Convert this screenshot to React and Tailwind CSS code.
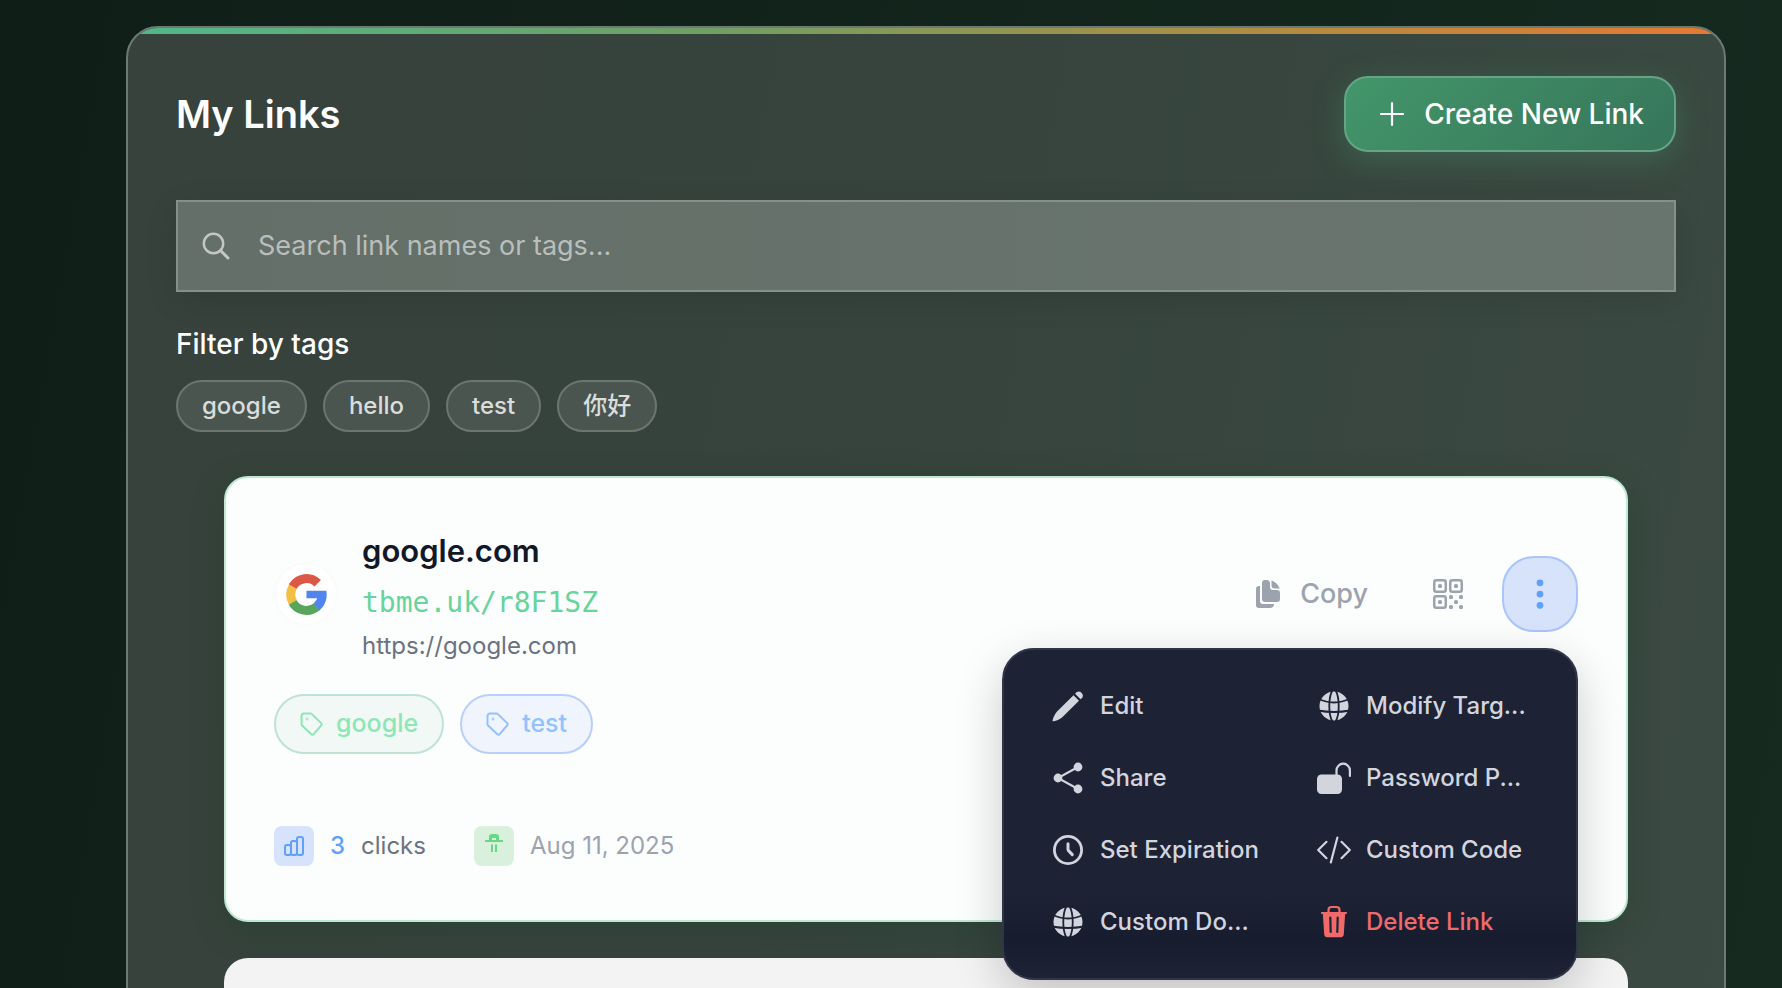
import { useState } from 'react';
import { IoEllipsisVertical } from 'react-icons/io5';

const filterTags = ['google', 'hello', 'test', '你好'];

const linkTags = [
    { label: 'google', style: 'border-[#bfe3d1] bg-[#f2f8f6] text-[#8de6b5]' },
    { label: 'test', style: 'border-[#b9cefb] bg-[#f0f4fd] text-[#93c1fc]' },
];

// Shared 32px frame for the menu and toolbar icons
const Icon = ({ children, outline = false }) => (
    <svg
        viewBox="0 0 32 32"
        width="32"
        height="32"
        className="shrink-0 overflow-visible"
        fill={outline ? 'none' : 'currentColor'}
        stroke={outline ? 'currentColor' : 'none'}
        strokeLinecap="round"
        strokeLinejoin="round"
        aria-hidden="true"
    >
        {children}
    </svg>
);

const PlusIcon = () => (
    <Icon outline>
        <path d="M16 5v22M5 16h22" strokeWidth="2.2" />
    </Icon>
);

const PencilIcon = () => (
    <Icon>
        <path d="M21.500 5.200l5.500 5.500L10.300 27.200C7.500 29.500 4.500 30.600 1.600 31.200c-.8.2-1.200-.2-1-.9C1.300 27.300 2.700 24.300 4.800 21.700z" />
        <path d="M23.100 3.700l1.700-1.700a4.200 4.200 0 0 1 5.500 5.800L28.500 9.300z" />
    </Icon>
);

const GlobeIcon = () => (
    <Icon>
        <circle cx="16" cy="16" r="14.500" />
        <g fill="none" stroke="#1e2235" strokeWidth="1.800">
            <path d="M14.500 0C10.200 8 10.200 24 14.500 32M17.500 0c4.300 8 4.300 24 0 32" />
            <path d="M0 8.500Q16 16.500 32 8.500M0 20.500Q16 23.500 32 20.500" />
        </g>
    </Icon>
);

const ShareIcon = () => (
    <Icon outline>
        <path d="M26 5L6 16l20 11" strokeWidth="2" />
        <g fill="currentColor" stroke="none">
            <circle cx="26" cy="5" r="4.400" />
            <circle cx="6" cy="16" r="4.400" />
            <circle cx="26" cy="27" r="4.400" />
        </g>
    </Icon>
);

const LockOpenIcon = () => (
    <Icon>
        <rect x="-1" y="12.500" width="25" height="19.500" rx="4.500" />
        <path d="M18.500 14V8.400a6.700 6.700 0 0 1 13.400 0V14" fill="none" stroke="currentColor" strokeWidth="2.200" />
    </Icon>
);

const ClockIcon = () => (
    <Icon outline>
        <circle cx="16" cy="16" r="13.600" strokeWidth="2.800" />
        <path d="M16 9.800v5.400a2 2 0 0 0 .5 1.400l3.800 4" strokeWidth="3" />
    </Icon>
);

const CodeIcon = () => (
    <Icon outline>
        <path d="M8.500 7.800L.2 16l8.300 8.200M23.500 7.800l8.300 8.200-8.300 8.200M19.400 3.500l-6.600 25" strokeWidth="2.200" />
    </Icon>
);

const TrashIcon = () => (
    <Icon>
        <path d="M10.500 6V4a3 3 0 0 1 3-3h5a3 3 0 0 1 3 3v2M4 7h24" fill="none" stroke="currentColor" strokeWidth="2.200" />
        <path d="M4.800 7h22.400l-1.400 21.200a3.200 3.200 0 0 1-3.200 3H9.400a3.200 3.200 0 0 1-3.200-3z" />
        <path d="M12.300 11.500l.4 14.500M19.700 11.500l-.4 14.500" fill="none" stroke="#1e2235" strokeWidth="2.200" />
    </Icon>
);

const SearchIcon = () => (
    <svg viewBox="0 0 28 28" width="28" height="28" fill="none" stroke="currentColor" strokeWidth="2.400" strokeLinecap="round" className="shrink-0 text-[#c3c8c5]" aria-hidden="true">
        <circle cx="11.500" cy="11.500" r="9.700" />
        <path d="M18.500 18.500l7.500 7.500" strokeWidth="3" />
    </svg>
);

const CopyIcon = () => (
    <svg viewBox="0 0 24 28" width="24" height="28" fill="currentColor" aria-hidden="true">
        <path d="M3 6h1v15a3 3 0 0 0 3 3h11a4 4 0 0 1-3.500 4H3a3 3 0 0 1-3-3V9a3 3 0 0 1 3-3z" />
        <path d="M9 0h1.500C13 0 14 1.500 14 3.500V7a3 3 0 0 0 3 3h4a3 3 0 0 1 3 3v6a3 3 0 0 1-3 3H9a3 3 0 0 1-3-3V3a3 3 0 0 1 3-3z" />
        <path d="M15.500.5c3.500 1 7 4.500 8.300 8h-5.300a3 3 0 0 1-3-3z" />
    </svg>
);

const GoogleIcon = () => (
    <svg viewBox="0 0 48 48" width="41" height="41" fill="none" strokeWidth="10.500" aria-hidden="true">
        <path stroke="#f2bf42" d="M8.300 14.400a18.700 18.700 0 0 0 0 19.200" />
        <path stroke="#db5847" d="M7.800 14.700A18.700 18.700 0 0 1 37.200 10.800" />
        <path stroke="#58a55c" d="M7.800 33.300a18.700 18.700 0 0 0 28.200 5" />
        <path stroke="#5184ee" d="M35.700 38.600a18.700 18.700 0 0 0 6.600-12" />
        <path fill="#5184ee" d="M24 19.500h23.300q.7 4.500-.2 9H24z" />
    </svg>
);

const TagIcon = () => (
    <svg viewBox="0 0 24 24" width="24" height="24" fill="none" stroke="currentColor" strokeWidth="2" strokeLinejoin="round" aria-hidden="true">
        <path d="M4 1.500h6.500a2 2 0 0 1 1.400.6l9.300 9a1.600 1.600 0 0 1 0 2.300l-7.500 8.800a1.600 1.600 0 0 1-2.400 0L2.100 13.600a2 2 0 0 1-.6-1.400V4A2.500 2.500 0 0 1 4 1.500z" />
        <path d="M5.500 7h3M7 5.500v3" strokeWidth="1" />
    </svg>
);

const BarsIcon = () => (
    <svg viewBox="0 0 24 24" width="24" height="24" fill="none" stroke="currentColor" strokeWidth="2" aria-hidden="true">
        <rect x="3" y="11" width="6" height="10" rx="2" />
        <rect x="9" y="7" width="6" height="14" rx="2" />
        <rect x="15" y="3" width="6" height="18" rx="2" />
    </svg>
);

const CalendarIcon = () => (
    <svg viewBox="0 0 20 20" width="20" height="20" fill="currentColor" aria-hidden="true">
        <path d="M1 6h4V3a3 3 0 0 1 3-3h4a3 3 0 0 1 3 3v3h4v2H1zM8 4v2h4V4z" fillRule="evenodd" />
        <path d="M7 10.500h2v7.500H7zM11 10.500h2v7.500h-2z" />
    </svg>
);

const QrIcon = () => (
    <svg viewBox="0 0 30 30" width="30" height="30" fill="none" stroke="currentColor" strokeWidth="2.500" aria-hidden="true">
        <rect x="1.250" y="1.250" width="11.500" height="11.500" rx="2" />
        <rect x="17.250" y="1.250" width="11.500" height="11.500" rx="2" />
        <rect x="1.250" y="17.250" width="11.500" height="11.500" rx="2" />
        <g fill="currentColor" stroke="none">
            <rect x="5" y="5" width="4" height="4" rx="1.500" />
            <rect x="21" y="5" width="4" height="4" rx="1.500" />
            <rect x="5" y="21" width="4" height="4" rx="1.500" />
            <rect x="16" y="16" width="4" height="4" rx="1.500" />
            <rect x="26" y="16" width="4" height="4" rx="1.500" />
            <rect x="21" y="21" width="4" height="4" rx="1.500" />
            <rect x="16" y="26" width="4" height="4" rx="1.500" />
            <rect x="26" y="26" width="4" height="4" rx="1.500" />
        </g>
    </svg>
);

const menuItems = [
    { icon: PencilIcon, label: 'Edit' },
    { icon: GlobeIcon, label: 'Modify Targ...' },
    { icon: ShareIcon, label: 'Share' },
    { icon: LockOpenIcon, label: 'Password P...' },
    { icon: ClockIcon, label: 'Set Expiration' },
    { icon: CodeIcon, label: 'Custom Code' },
    { icon: GlobeIcon, label: 'Custom Do...' },
    { icon: TrashIcon, label: 'Delete Link', danger: true },
];

const ActionMenu = () => (
    <div className="absolute right-0 top-full mt-4 grid w-[576px] grid-cols-2 rounded-[32px] border-2 border-[#303648] bg-[linear-gradient(180deg,#1e2235_0%,#1e2235_74%,#171c2e_88%,#1e2235_100%)] p-5 shadow-[0_16px_48px_rgba(0,0,0,0.2)] z-10">
        {menuItems.map(({ icon: ItemIcon, label, danger }) => (
            <button
                key={label}
                className={`flex h-[72px] items-center gap-4 px-7 text-2xl font-medium whitespace-nowrap ${danger ? 'text-[#f06a6a]' : 'text-[#d2d5dd]'}`}
            >
                <ItemIcon />
                <span>{label}</span>
            </button>
        ))}
    </div>
);

const LinkCard = () => {
    const [menuOpen, setMenuOpen] = useState(true);

    return (
        <article className="rounded-3xl border-2 border-[#bfe8d3] bg-[#fcfdfd] px-12 pt-11 pb-[54px] shadow-[0_8px_32px_rgba(16,60,40,0.25)]">
            <div className="flex items-center justify-between">
                <div className="flex items-center gap-[26px]">
                    <div className="ml-0.5 flex size-15 items-center justify-center rounded-full bg-white shadow-[0_0_4px_rgba(0,0,0,0.03)]">
                        <GoogleIcon />
                    </div>
                    <div>
                        <h2 className="text-[31px] leading-[58px] font-semibold text-[#111827]">google.com</h2>
                        <a href="#r8F1SZ" className="block font-['DejaVu_Sans_Mono',monospace] text-[28px] leading-[46px] text-[#68d39b]">tbme.uk/r8F1SZ</a>
                        <p className="text-2xl leading-[40px] text-[#6b7280]">https://google.com</p>
                    </div>
                </div>
                <div className="relative flex items-center gap-4 text-[#9ca3af]">
                    <button className="flex h-[76px] items-center gap-5 px-[26px] text-[27px] font-medium">
                        <CopyIcon />
                        Copy
                    </button>
                    <button aria-label="QR code" className="flex size-[76px] items-center justify-center">
                        <QrIcon />
                    </button>
                    <button
                        aria-label="More actions"
                        onClick={() => setMenuOpen(!menuOpen)}
                        className="flex size-[76px] items-center justify-center rounded-[32px] border-2 border-[#a9c4fb] bg-[#d7e2fb] text-[#60a0fa]"
                    >
                        <IoEllipsisVertical size={36} />
                    </button>
                    {menuOpen && <ActionMenu />}
                </div>
            </div>

            <div className="mt-7 flex gap-4">
                {linkTags.map((tag) => (
                    <span key={tag.label} className={`flex h-[60px] items-center gap-3 rounded-full border-2 px-6 text-[25px] font-medium ${tag.style}`}>
                        <TagIcon />
                        {tag.label}
                    </span>
                ))}
            </div>

            <div className="mt-[72px] flex items-center gap-12 text-2xl">
                <div className="flex items-center gap-4 text-[#6b7280]">
                    <span className="flex size-10 items-center justify-center rounded-lg bg-[#d7e2fb] text-[#60a0fa]">
                        <BarsIcon />
                    </span>
                    <span className="font-medium text-[#60a0fa]">3</span>
                    <span>clicks</span>
                </div>
                <div className="flex items-center gap-4 text-[#9ca3af]">
                    <span className="flex size-10 items-start justify-center rounded-lg bg-[#d8f0dc] pt-2 text-[#67d985]">
                        <CalendarIcon />
                    </span>
                    <time dateTime="2025-08-11">Aug 11, 2025</time>
                </div>
            </div>
        </article>
    );
};

const App = () => {
    const [query, setQuery] = useState('');

    return (
        <div className="h-screen overflow-hidden bg-[linear-gradient(100deg,#101e18_0%,#12241b_50%,#162a20_100%)] pt-[26px] pr-14 pl-[126px] font-[Inter,'Noto_Sans_CJK_SC',sans-serif] text-white">
            <main className="relative min-h-screen overflow-hidden rounded-[32px] border-2 border-[#6b7a72] bg-[linear-gradient(100deg,#36423b_0%,#36443d_50%,#3b4a42_100%)] px-12 pt-12">
                <div className="absolute inset-x-0 top-0 h-[6px] bg-[linear-gradient(90deg,#52b788_0%,#6fa065_35%,#b58a40_74%,#e87932_100%)]" />

                <header className="flex items-center justify-between">
                    <h1 className="text-[38px] font-semibold">My Links</h1>
                    <button className="flex h-[76px] items-center gap-4 rounded-3xl border-2 border-[#65a586] bg-[linear-gradient(135deg,#43966a,#36755a)] px-[30px] text-[28px] font-medium shadow-[0_8px_32px_rgba(82,183,136,0.25)]">
                        <PlusIcon />
                        Create New Link
                    </button>
                </header>

                <div className="mt-12 flex h-[92px] items-center gap-7 border-2 border-[#84908a] bg-[linear-gradient(90deg,#656f69,#68756e)] px-6 shadow-[0_8px_32px_rgba(0,0,0,0.1)]">
                    <SearchIcon />
                    <input
                        type="text"
                        aria-label="Search links"
                        value={query}
                        onChange={(e) => setQuery(e.target.value)}
                        placeholder="Search link names or tags..."
                        className="flex-1 bg-transparent text-[27px] outline-none placeholder:text-[#b9bfbb]"
                    />
                </div>

                <h2 className="mt-8 text-[28px] leading-10 font-medium">Filter by tags</h2>
                <div className="mt-4 flex gap-4">
                    {filterTags.map((tag) => (
                        <button key={tag} className="h-[52px] rounded-full border-2 border-[#6b766f] bg-[#4b554f] px-6 text-2xl font-medium text-[#dadddb]">
                            {tag}
                        </button>
                    ))}
                </div>

                <section className="mx-12 mt-11 space-y-9">
                    <LinkCard />
                    <article className="h-[446px] rounded-3xl bg-[#f3f3f3]" />
                </section>
            </main>
        </div>
    );
};

export default App;
